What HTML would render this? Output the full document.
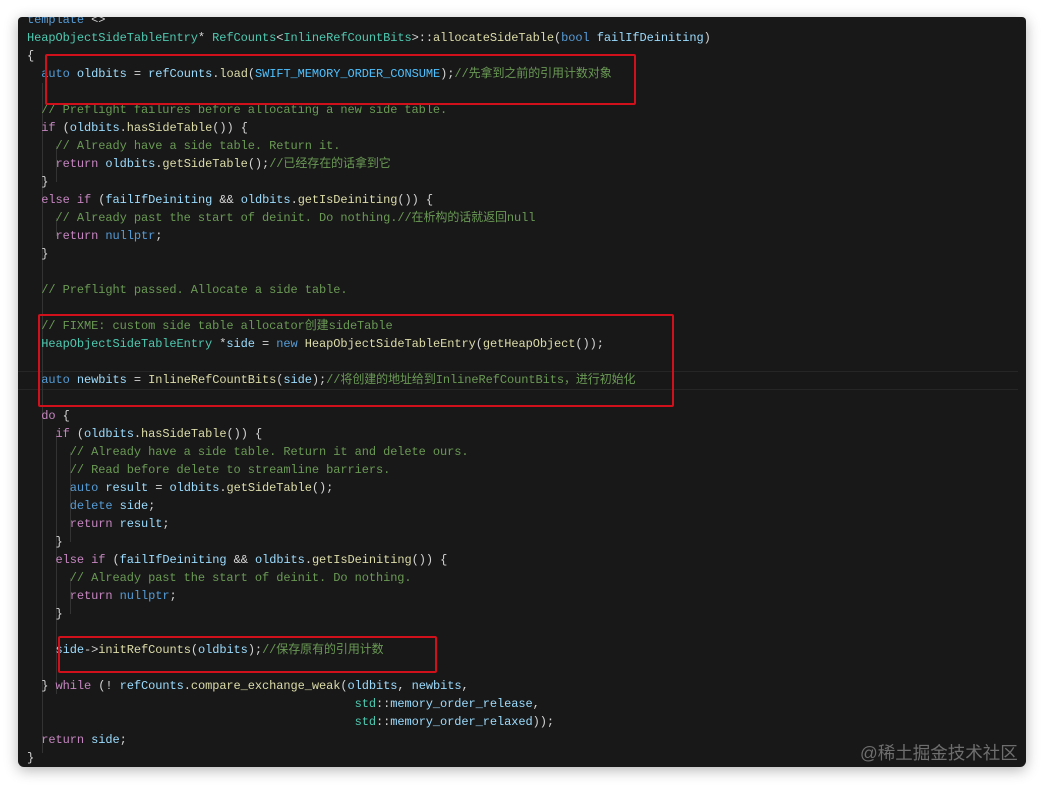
<!DOCTYPE html>
<html><head><meta charset="utf-8"><style>
html,body{margin:0;padding:0;background:#fff;width:1044px;height:786px;overflow:hidden;position:relative}
.win{position:absolute;left:18px;top:17px;width:1008px;height:750px;background:#181818;border-radius:4px 4px 6px 6px;box-shadow:0 3px 14px rgba(0,0,0,.3);overflow:hidden}
.l{position:absolute;left:9px;white-space:pre;font-family:"Liberation Mono","Noto Sans CJK SC",monospace;font-size:12px;letter-spacing:-0.08px;line-height:18px;color:#d4d4d4}
.k{color:#c586c0}.b{color:#569cd6}.v{color:#9cdcfe}.f{color:#dcdcaa}.t{color:#4ec9b0}.c{color:#6a9955}.n{color:#4fc1ff}
.box{position:absolute;border:2px solid #d0101a;border-radius:2px}
.g{position:absolute;width:1px;background:#333}
.wm{position:absolute;left:860px;top:740px;font-family:"Liberation Sans","Noto Sans CJK SC",sans-serif;font-size:17.5px;color:#6e6e6e}
.hl{position:absolute;left:0;width:1000px;height:1px;background:#262626}
</style></head><body>
<div class="win">
<div class="hl" style="top:354px"></div><div class="hl" style="top:372px"></div>
<div class="g" style="left:24px;top:66px;height:670px"></div>
<div class="g" style="left:38px;top:129px;height:36px"></div>
<div class="g" style="left:38px;top:201px;height:18px"></div>
<div class="g" style="left:38px;top:417px;height:260px"></div>
<div class="g" style="left:52px;top:435px;height:90px"></div>
<div class="g" style="left:52px;top:561px;height:36px"></div>
<div class="l" style="top:-6px"><span class="b">template</span> &lt;&gt;</div>
<div class="l" style="top:12px"><span class="t">HeapObjectSideTableEntry</span>* <span class="t">RefCounts</span>&lt;<span class="t">InlineRefCountBits</span>&gt;::<span class="f">allocateSideTable</span>(<span class="b">bool</span> <span class="v">failIfDeiniting</span>)</div>
<div class="l" style="top:30px">{</div>
<div class="l" style="top:48px">  <span class="b">auto</span> <span class="v">oldbits</span> = <span class="v">refCounts</span>.<span class="f">load</span>(<span class="n">SWIFT_MEMORY_ORDER_CONSUME</span>);<span class="c">//先拿到之前的引用计数对象</span></div>
<div class="l" style="top:84px">  <span class="c">// Preflight failures before allocating a new side table.</span></div>
<div class="l" style="top:102px">  <span class="k">if</span> (<span class="v">oldbits</span>.<span class="f">hasSideTable</span>()) {</div>
<div class="l" style="top:120px">    <span class="c">// Already have a side table. Return it.</span></div>
<div class="l" style="top:138px">    <span class="k">return</span> <span class="v">oldbits</span>.<span class="f">getSideTable</span>();<span class="c">//已经存在的话拿到它</span></div>
<div class="l" style="top:156px">  }</div>
<div class="l" style="top:174px">  <span class="k">else</span> <span class="k">if</span> (<span class="v">failIfDeiniting</span> &amp;&amp; <span class="v">oldbits</span>.<span class="f">getIsDeiniting</span>()) {</div>
<div class="l" style="top:192px">    <span class="c">// Already past the start of deinit. Do nothing.//在析构的话就返回null</span></div>
<div class="l" style="top:210px">    <span class="k">return</span> <span class="b">nullptr</span>;</div>
<div class="l" style="top:228px">  }</div>
<div class="l" style="top:264px">  <span class="c">// Preflight passed. Allocate a side table.</span></div>
<div class="l" style="top:300px">  <span class="c">// FIXME: custom side table allocator创建sideTable</span></div>
<div class="l" style="top:318px">  <span class="t">HeapObjectSideTableEntry</span> *<span class="v">side</span> = <span class="b">new</span> <span class="f">HeapObjectSideTableEntry</span>(<span class="f">getHeapObject</span>());</div>
<div class="l" style="top:354px">  <span class="b">auto</span> <span class="v">newbits</span> = <span class="f">InlineRefCountBits</span>(<span class="v">side</span>);<span class="c">//将创建的地址给到InlineRefCountBits，进行初始化</span></div>
<div class="l" style="top:390px">  <span class="k">do</span> {</div>
<div class="l" style="top:408px">    <span class="k">if</span> (<span class="v">oldbits</span>.<span class="f">hasSideTable</span>()) {</div>
<div class="l" style="top:426px">      <span class="c">// Already have a side table. Return it and delete ours.</span></div>
<div class="l" style="top:444px">      <span class="c">// Read before delete to streamline barriers.</span></div>
<div class="l" style="top:462px">      <span class="b">auto</span> <span class="v">result</span> = <span class="v">oldbits</span>.<span class="f">getSideTable</span>();</div>
<div class="l" style="top:480px">      <span class="b">delete</span> <span class="v">side</span>;</div>
<div class="l" style="top:498px">      <span class="k">return</span> <span class="v">result</span>;</div>
<div class="l" style="top:516px">    }</div>
<div class="l" style="top:534px">    <span class="k">else</span> <span class="k">if</span> (<span class="v">failIfDeiniting</span> &amp;&amp; <span class="v">oldbits</span>.<span class="f">getIsDeiniting</span>()) {</div>
<div class="l" style="top:552px">      <span class="c">// Already past the start of deinit. Do nothing.</span></div>
<div class="l" style="top:570px">      <span class="k">return</span> <span class="b">nullptr</span>;</div>
<div class="l" style="top:588px">    }</div>
<div class="l" style="top:624px">    <span class="v">side</span>-&gt;<span class="f">initRefCounts</span>(<span class="v">oldbits</span>);<span class="c">//保存原有的引用计数</span></div>
<div class="l" style="top:660px">  } <span class="k">while</span> (! <span class="v">refCounts</span>.<span class="f">compare_exchange_weak</span>(<span class="v">oldbits</span>, <span class="v">newbits</span>,</div>
<div class="l" style="top:678px">                                              <span class="t">std</span>::<span class="v">memory_order_release</span>,</div>
<div class="l" style="top:696px">                                              <span class="t">std</span>::<span class="v">memory_order_relaxed</span>));</div>
<div class="l" style="top:714px">  <span class="k">return</span> <span class="v">side</span>;</div>
<div class="l" style="top:732px">}</div>
</div>
<div class="box" style="left:45px;top:54px;width:587px;height:47px"></div>
<div class="box" style="left:38px;top:314px;width:632px;height:89px"></div>
<div class="box" style="left:58px;top:636px;width:375px;height:33px"></div>
<div class="wm">@稀土掘金技术社区</div>
</body></html>
